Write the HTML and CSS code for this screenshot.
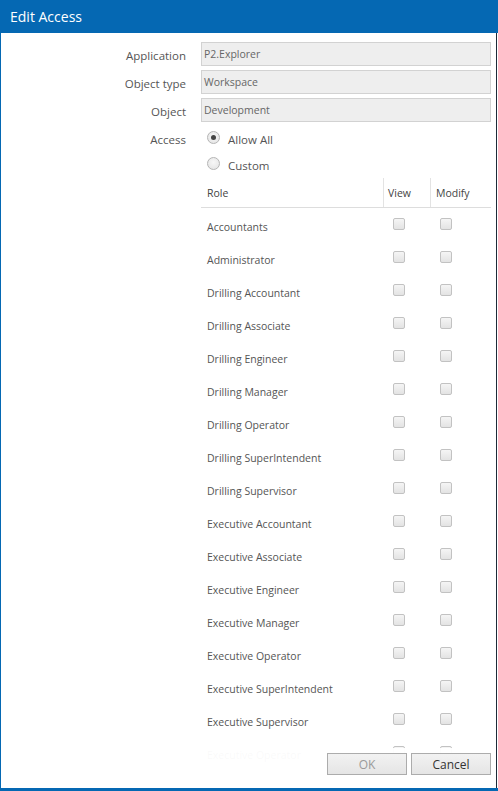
FILE: index.html
```html
<!DOCTYPE html>
<html>
<head>
<meta charset="utf-8">
<link rel="stylesheet" href="styles.css">
</head>
<body>
<div class="dialog">
  <div class="titlebar">Edit Access</div>
  <div class="content">
    <div class="form">
      <div class="label">Application</div>
      <div class="field"><div class="input">P2.Explorer</div></div>
      <div class="label">Object type</div>
      <div class="field"><div class="input">Workspace</div></div>
      <div class="label">Object</div>
      <div class="field"><div class="input">Development</div></div>
      <div class="label access-label">Access</div>
      <div class="field">
        <div class="radio-row first"><span class="radio checked"></span><span>Allow All</span></div>
        <div class="radio-row second"><span class="radio"></span><span>Custom</span></div>
        <div class="table">
          <div class="thead">
            <div class="th role">Role</div>
            <div class="th view">View</div>
            <div class="th modify">Modify</div>
          </div>
          <div class="tr"><div class="td role">Accountants</div><div class="td view"><span class="cb"></span></div><div class="td modify"><span class="cb"></span></div></div>
          <div class="tr"><div class="td role">Administrator</div><div class="td view"><span class="cb"></span></div><div class="td modify"><span class="cb"></span></div></div>
          <div class="tr"><div class="td role">Drilling Accountant</div><div class="td view"><span class="cb"></span></div><div class="td modify"><span class="cb"></span></div></div>
          <div class="tr"><div class="td role">Drilling Associate</div><div class="td view"><span class="cb"></span></div><div class="td modify"><span class="cb"></span></div></div>
          <div class="tr"><div class="td role">Drilling Engineer</div><div class="td view"><span class="cb"></span></div><div class="td modify"><span class="cb"></span></div></div>
          <div class="tr"><div class="td role">Drilling Manager</div><div class="td view"><span class="cb"></span></div><div class="td modify"><span class="cb"></span></div></div>
          <div class="tr"><div class="td role">Drilling Operator</div><div class="td view"><span class="cb"></span></div><div class="td modify"><span class="cb"></span></div></div>
          <div class="tr"><div class="td role">Drilling SuperIntendent</div><div class="td view"><span class="cb"></span></div><div class="td modify"><span class="cb"></span></div></div>
          <div class="tr"><div class="td role">Drilling Supervisor</div><div class="td view"><span class="cb"></span></div><div class="td modify"><span class="cb"></span></div></div>
          <div class="tr"><div class="td role">Executive Accountant</div><div class="td view"><span class="cb"></span></div><div class="td modify"><span class="cb"></span></div></div>
          <div class="tr"><div class="td role">Executive Associate</div><div class="td view"><span class="cb"></span></div><div class="td modify"><span class="cb"></span></div></div>
          <div class="tr"><div class="td role">Executive Engineer</div><div class="td view"><span class="cb"></span></div><div class="td modify"><span class="cb"></span></div></div>
          <div class="tr"><div class="td role">Executive Manager</div><div class="td view"><span class="cb"></span></div><div class="td modify"><span class="cb"></span></div></div>
          <div class="tr"><div class="td role">Executive Operator</div><div class="td view"><span class="cb"></span></div><div class="td modify"><span class="cb"></span></div></div>
          <div class="tr"><div class="td role">Executive SuperIntendent</div><div class="td view"><span class="cb"></span></div><div class="td modify"><span class="cb"></span></div></div>
          <div class="tr"><div class="td role">Executive Supervisor</div><div class="td view"><span class="cb"></span></div><div class="td modify"><span class="cb"></span></div></div>
          <div class="tr last"><div class="td role">Executive Operator</div><div class="td view"><span class="cb"></span></div><div class="td modify"><span class="cb"></span></div></div>
        </div>
      </div>
    </div>
    <div class="footer">
      <button class="btn disabled">OK</button>
      <button class="btn">Cancel</button>
    </div>
  </div>
</div>
</body>
</html>
```

FILE: styles.css
```css
html, body {
  margin: 0;
  padding: 0;
  background: #ffffff;
}
body {
  font-family: "Open Sans", "Noto Sans", sans-serif;
  font-size: 11px;
  color: #555555;
}
.dialog {
  width: 498px;
  height: 791px;
  box-sizing: border-box;
  border-left: 1px solid #0568b3;
  border-bottom: 3px solid #0568b3;
  display: flex;
  flex-direction: column;
  overflow: hidden;
}
.titlebar {
  height: 33px;
  flex: none;
  background: #0568b3;
  color: #ffffff;
  font-size: 14px;
  line-height: 33px;
  padding-left: 9px;
}
.content {
  flex: 1;
  position: relative;
  overflow: hidden;
  border-right: 1px solid #1d2a38;
  margin-right: 1px;
}
.form {
  display: grid;
  grid-template-columns: 185px 290px;
  column-gap: 15px;
  row-gap: 4px;
  padding-top: 9px;
}
.label {
  text-align: right;
  line-height: 20px;
  padding-top: 4px;
  color: #555555;
  font-size: 11.5px;
}
.access-label {
  line-height: 16px;
  padding-top: 6px;
}
.input {
  height: 24px;
  box-sizing: border-box;
  border: 1px solid #d2d2d2;
  background: #eeeeee;
  color: #666666;
  line-height: 22px;
  padding-left: 2px;
  font-size: 10.5px;
}
.radio-row {
  display: flex;
  align-items: center;
  gap: 8px;
  height: 24px;
  padding-left: 6px;
  font-size: 11.5px;
  color: #555555;
}
.radio-row.first {
  margin-top: 1px;
}
.radio-row.second {
  margin-top: 2px;
}
.radio {
  width: 11px;
  height: 11px;
  border-radius: 50%;
  border: 1px solid #b5b5b5;
  background: radial-gradient(circle at 50% 40%, #f7f7f7 0%, #e2e2e2 100%);
  position: relative;
  flex: none;
  margin-top: -3px;
}
.radio.checked::after {
  content: "";
  position: absolute;
  left: 3px;
  top: 3px;
  width: 5px;
  height: 5px;
  border-radius: 50%;
  background: #444444;
}
.table {
  margin-top: 1px;
}
.thead {
  display: flex;
  height: 29px;
  border-bottom: 1px solid #dddddd;
}
.th {
  line-height: 30px;
  font-size: 10.5px;
  color: #444444;
}
.role {
  width: 182px;
  padding-left: 6px;
  box-sizing: border-box;
}
.view {
  width: 47px;
  box-sizing: border-box;
  padding-left: 4px;
}
.modify {
  width: 61px;
  box-sizing: border-box;
  padding-left: 5px;
}
.th.view, .th.modify {
  border-left: 1px solid #e3e3e3;
}
.tr {
  display: flex;
  height: 33px;
}
.td {
  font-size: 10.5px;
  color: #555555;
}
.td.role {
  padding-top: 12px;
}
.td.view {
  padding-left: 10px;
  padding-top: 10px;
}
.td.modify {
  padding-left: 10px;
  padding-top: 10px;
}
.cb {
  display: block;
  width: 12px;
  height: 12px;
  box-sizing: border-box;
  border: 1px solid #c2c2c2;
  border-radius: 2px;
  background: linear-gradient(#f5f5f5, #e3e3e3);
}
.footer {
  position: absolute;
  left: 0;
  right: 0;
  bottom: 0;
  height: 40px;
  background: rgba(255, 255, 255, 0.97);
  display: flex;
  justify-content: flex-end;
  align-items: flex-start;
  gap: 4px;
  padding-top: 5px;
  padding-right: 5px;
  box-sizing: border-box;
}
.btn {
  width: 80px;
  height: 22px;
  border: 1px solid #acacac;
  border-radius: 0;
  background: linear-gradient(#f2f2f2, #e5e5e5);
  font-family: "Open Sans", "Noto Sans", sans-serif;
  font-size: 12px;
  color: #333333;
  padding: 0;
}
.btn.disabled {
  color: #9a9a9a;
}
```
